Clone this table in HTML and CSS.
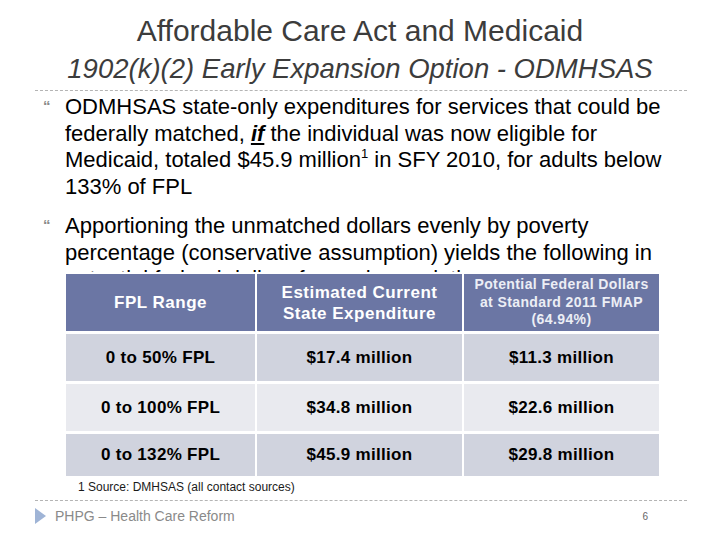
FILE: index.html
```html
<!DOCTYPE html>
<html>
<head>
<meta charset="utf-8">
<link rel="stylesheet" href="styles.css">
</head>
<body>
<div class="slide">
  <h1 class="title">Affordable Care Act and Medicaid</h1>
  <h2 class="subtitle">1902(k)(2) Early Expansion Option - ODMHSAS</h2>
  <div class="rule"></div>
  <div class="content">
    <ul class="bullets">
      <li><span class="mark">&#8220;</span><p>ODMHSAS state-only expenditures for services that could be<br>federally matched, <em class="ul">if</em> the individual was now eligible for<br>Medicaid, totaled $45.9 million<sup>1</sup> in SFY 2010, for adults below<br>133% of FPL</p></li>
      <li><span class="mark">&#8220;</span><p>Apportioning the unmatched dollars evenly by poverty<br>percentage (conservative assumption) yields the following in<br>potential federal dollars for each population:</p></li>
    </ul>
  </div>
  <div class="table">
    <div class="th">FPL Range</div>
    <div class="th">Estimated Current<br>State Expenditure</div>
    <div class="th small">Potential Federal Dollars<br>at Standard 2011 FMAP<br>(64.94%)</div>
    <div class="td dark">0 to 50% FPL</div>
    <div class="td dark">$17.4 million</div>
    <div class="td dark">$11.3 million</div>
    <div class="td light">0 to 100% FPL</div>
    <div class="td light">$34.8 million</div>
    <div class="td light">$22.6 million</div>
    <div class="td dark">0 to 132% FPL</div>
    <div class="td dark">$45.9 million</div>
    <div class="td dark">$29.8 million</div>
  </div>
  <div class="footnote">1 Source: DMHSAS (all contact sources)</div>
  <div class="rule footrule"></div>
  <div class="footer">
    <span class="tri"></span>
    <span class="foottext">PHPG – Health Care Reform</span>
    <span class="pagenum">6</span>
  </div>
</div>
</body>
</html>
```
FILE: styles.css
```css
html, body {
  margin: 0;
  padding: 0;
  background: #ffffff;
}
.slide {
  width: 720px;
  height: 540px;
  overflow: hidden;
  display: flex;
  flex-direction: column;
  font-family: "Liberation Sans", Arial, sans-serif;
}
.title {
  margin: 0;
  padding-top: 14px;
  font-size: 30px;
  line-height: 34px;
  font-weight: normal;
  color: #3c3c3c;
  text-align: center;
}
.subtitle {
  margin: 6px 0 0 0;
  font-size: 27.5px;
  line-height: 30px;
  font-weight: normal;
  font-style: italic;
  color: #3c3c3c;
  text-align: center;
}
.rule {
  margin: 6px 33px 0 35px;
  border-top: 1px dashed #b4b4b4;
  height: 0;
}
.content {
  height: 181px;
  margin-bottom: 2px;
  overflow: hidden;
}
.bullets {
  list-style: none;
  margin: 0;
  padding: 3px 0 0 43px;
}
.bullets li {
  display: flex;
  margin-bottom: 13px;
}
.mark {
  width: 22px;
  flex: none;
  font-size: 15px;
  line-height: 24px;
  color: #8a8a8a;
  font-weight: bold;
}
.bullets p {
  margin: 0;
  font-size: 22px;
  line-height: 26.5px;
  color: #000;
  white-space: nowrap;
}
.ul {
  font-style: italic;
  font-weight: bold;
  text-decoration: underline;
}
sup {
  font-size: 13px;
  line-height: 0;
  vertical-align: 9px;
}
.table {
  margin-left: 66px;
  width: 593px;
  display: grid;
  grid-template-columns: 189px 205px 195px;
  grid-template-rows: 57px 47px 47px 42px;
  column-gap: 2px;
  row-gap: 3px;
}
.th {
  background: #6b76a4;
  color: #ffffff;
  font-weight: bold;
  font-size: 17px;
  line-height: 21px;
  letter-spacing: 0.5px;
  display: flex;
  align-items: center;
  justify-content: center;
  text-align: center;
}
.th.small {
  font-size: 14px;
  line-height: 17.5px;
  letter-spacing: 0.4px;
  color: #eceef5;
}
.td {
  color: #000;
  font-weight: bold;
  font-size: 17px;
  letter-spacing: 0.3px;
  display: flex;
  align-items: center;
  justify-content: center;
}
.dark {
  background: #d0d3de;
}
.light {
  background: #e9eaef;
}
.footnote {
  margin: 4px 0 0 78px;
  font-size: 12px;
  line-height: 14px;
  color: #1a1a1a;
}
.footrule {
  margin-top: 6px;
}
.footer {
  display: flex;
  align-items: center;
  height: 30px;
  padding-left: 35px;
}
.tri {
  width: 0;
  height: 0;
  border-top: 8px solid transparent;
  border-bottom: 8px solid transparent;
  border-left: 11px solid #9fb4d6;
  margin-right: 9px;
}
.foottext {
  font-size: 14px;
  color: #8a8a8a;
}
.pagenum {
  margin-left: auto;
  margin-right: 72px;
  font-size: 10px;
  color: #666;
}
```
